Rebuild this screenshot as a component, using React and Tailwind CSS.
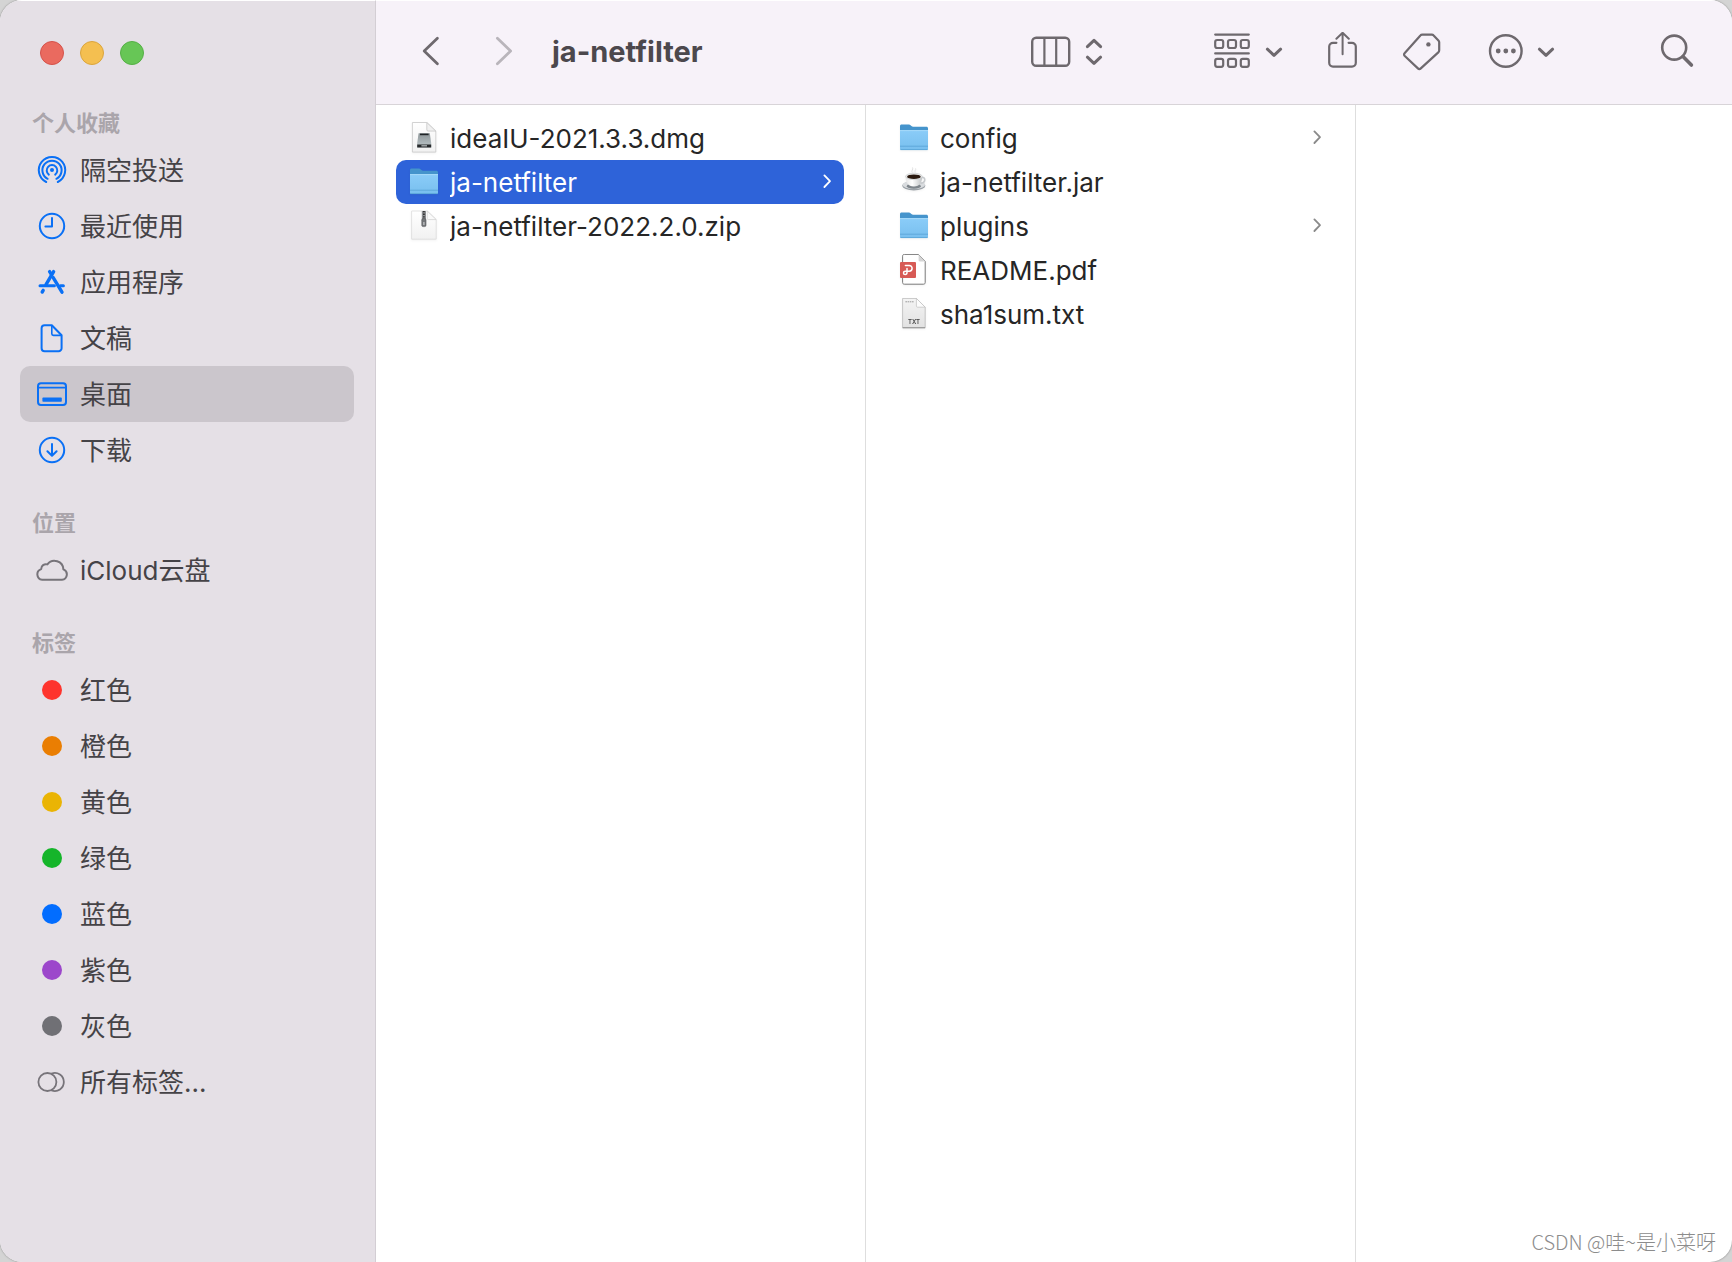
import React from "react";

const favorites = [
  { label: "隔空投送", icon: "airdrop" },
  { label: "最近使用", icon: "clock" },
  { label: "应用程序", icon: "apps" },
  { label: "文稿", icon: "document" },
  { label: "桌面", icon: "desktop", active: true },
  { label: "下载", icon: "download" },
];

const locations = [{ label: "iCloud云盘", icon: "cloud" }];

const tags = [
  { label: "红色", dot: "bg-[#fe342d]" },
  { label: "橙色", dot: "bg-[#ea7e02]" },
  { label: "黄色", dot: "bg-[#eab404]" },
  { label: "绿色", dot: "bg-[#15b52a]" },
  { label: "蓝色", dot: "bg-[#026dff]" },
  { label: "紫色", dot: "bg-[#9c47cb]" },
  { label: "灰色", dot: "bg-[#707075]" },
  { label: "所有标签...", icon: "allTags" },
];

const columns = [
  [
    { name: "ideaIU-2021.3.3.dmg", kind: "dmg" },
    { name: "ja-netfilter", kind: "folder", selected: true },
    { name: "ja-netfilter-2022.2.0.zip", kind: "zip" },
  ],
  [
    { name: "config", kind: "folder" },
    { name: "ja-netfilter.jar", kind: "jar" },
    { name: "plugins", kind: "folder" },
    { name: "README.pdf", kind: "pdf" },
    { name: "sha1sum.txt", kind: "txt" },
  ],
];

/* Sidebar icons, all on a 32px grid */
const sidebarIcons = {
  airdrop: (
    <g>
      <circle cx="16" cy="16" r="2" fill="currentColor" stroke="none" />
      <path d="M12.8 20.6a5.3 5.3 0 1 1 6.400 0" />
      <path d="M11.600 24.800a9.600 9.600 0 1 1 8.800 0" />
      <path d="M10.200 28a13.200 13.200 0 1 1 11.600 0" />
    </g>
  ),
  clock: (
    <g>
      <circle cx="16" cy="16" r="12.2" />
      <path d="M16 8v8.6H9.4" />
    </g>
  ),
  apps: (
    <g strokeWidth="3.4">
      <path d="M17.6 5.6 10 18.6" />
      <path d="M13.6 5.6l1.6 2.6" />
      <path d="M4 19.8h14.4M24.4 19.8h3" strokeWidth="3" />
      <path d="M17.2 11.6 26 26.2" />
      <path d="M7.2 24.4 6.2 26" />
    </g>
  ),
  document: (
    <g>
      <path d="M8.6 3.2h7.2l9.8 10v13a3 3 0 0 1-3 3h-14a3 3 0 0 1-3-3v-20a3 3 0 0 1 3-3z" />
      <path d="M15.8 3.8v8a1.6 1.6 0 0 0 1.6 1.6h7.6" strokeWidth="1.6" />
    </g>
  ),
  desktop: (
    <g>
      <rect x="2" y="5.2" width="28" height="21.8" rx="3" />
      <path d="M2 9.6h28" strokeWidth="1.6" />
      <rect x="6.4" y="19.6" width="19.4" height="4.2" rx="0.8" fill="currentColor" stroke="none" />
    </g>
  ),
  download: (
    <g>
      <circle cx="16" cy="16" r="12.2" />
      <path d="M16 10v11.4M11.4 17.2l4.6 4.6 4.6-4.6" />
    </g>
  ),
  cloud: (
    <path d="M6.200 25.800a5.500 5.500 0 0 1-1-10.700 4.800 4.800 0 0 1 6.200-4.700 8.900 8.900 0 0 1 16 5 5.400 5.400 0 0 1-1.400 10.400z" />
  ),
  allTags: (
    <g strokeWidth="1.800">
      <circle cx="11.400" cy="16" r="9" />
      <path d="M15.600 7.600a9 9 0 1 1 0 16.800" />
    </g>
  ),
};

const SidebarIcon = ({ name }) => (
  <svg
    viewBox="0 0 32 32"
    className="h-8 w-8"
    fill="none"
    stroke="currentColor"
    strokeWidth="2"
    strokeLinecap="round"
    strokeLinejoin="round"
    aria-hidden="true"
  >
    {sidebarIcons[name]}
  </svg>
);

/* File icons, all on a 32px grid */
const fileIcons = {
  folder: (
    <g>
      <path d="M2 5.2c0-1 .6-1.6 1.6-1.6h7.2c1.8 0 2.2 2.2 4.2 2.2h13.4c1 0 1.6.6 1.6 1.6V20H2z" fill="#4594cc" />
      <path d="M2 9.6h28v17.8c0 1-.6 1.6-1.6 1.6H3.6c-1 0-1.6-.6-1.6-1.6z" fill="url(#folderFront)" />
      <path d="M2 9.6h28" stroke="#a9dcfb" strokeWidth="1" />
      <path d="M2 25.2h28M2.400 28.600h27.200" stroke="#5aa5d8" strokeWidth="0.9" />
    </g>
  ),
  dmg: (
    <g>
      <path d="M4.4 1.5h14.4l9 8.6v21H4.400z" fill="url(#paper)" stroke="#c6c6c6" strokeWidth="0.8" />
      <path d="M18.8 1.5v7.4c0 .7.5 1.2 1.2 1.2h7.8z" fill="#f0f0f0" stroke="#c2c2c2" strokeWidth="0.7" />
      <path d="M10.600 12.200h11.200l1.400 9.800v4.400H9.200V22z" fill="url(#drive)" />
      <path d="M12 13.400h8.600" stroke="#202427" strokeWidth="1.600" />
      <path d="M9.200 23.400h14v3.200h-14z" fill="#26292b" />
      <path d="M13.400 24.800h5.600" stroke="#a5abad" strokeWidth="1.400" />
    </g>
  ),
  zip: (
    <g>
      <path d="M3.6 2h15.6l9 8.6v19.6H3.6z" fill="url(#paper)" stroke="#dcdcdc" strokeWidth="0.8" />
      <path d="M19.2 2v7.4c0 .7.5 1.2 1.2 1.2h7.8z" fill="#fafafa" stroke="#cecece" strokeWidth="0.7" />
      <rect x="13.8" y="2" width="4.2" height="10" fill="#8b8d90" />
      <path d="M15.9 2v11" stroke="#333" strokeWidth="1.8" strokeDasharray="1.3 1.3" />
      <rect x="13.8" y="9.6" width="4.2" height="8" rx="1.4" fill="#75777a" stroke="#55575a" strokeWidth="0.6" />
      <path d="M15.9 13v3" stroke="#c8cacc" strokeWidth="1.2" />
    </g>
  ),
  jar: (
    <g>
      <ellipse cx="15.8" cy="20.8" rx="11.6" ry="4.6" fill="#9aa0a6" />
      <ellipse cx="15.8" cy="19.8" rx="11.4" ry="4" fill="#d9dcdf" />
      <ellipse cx="15.8" cy="21.2" rx="7" ry="2.6" fill="#7f868c" />
      <path d="M23.4 12.4c4.6-.8 4.8 5.4-1 6" fill="none" stroke="#c7cacd" strokeWidth="1.6" />
      <path d="M7.6 11.4h16.6c0 5.4-2.2 10-8.3 10s-8.3-4.6-8.3-10z" fill="url(#cup)" />
      <ellipse cx="15.9" cy="11.4" rx="8.3" ry="3.2" fill="#eceded" stroke="#b9bcbe" strokeWidth="0.5" />
      <ellipse cx="15.9" cy="11.7" rx="6.8" ry="2.3" fill="#2b1a10" />
      <path d="M14.4 7.6c-1.6-2 1.4-3 0-5.2M17.4 7.4c-1.4-1.6 1-2.6.2-4" fill="none" stroke="#dfdfdf" strokeWidth="0.9" />
    </g>
  ),
  pdf: (
    <g>
      <path d="M6.4 1.4h14l6.8 7v21c0 1.200-.6 1.800-1.800 1.800h-19c-1.200 0-1.800-.6-1.800-1.800V3.200c0-1.200.6-1.800 1.800-1.800z" fill="#fff" stroke="#6b6b6b" strokeWidth="0.9" />
      <path d="M20.6 1.6v5.6c0 .8.4 1.2 1.2 1.2h5.4z" fill="#d5d5d5" />
      <rect x="2" y="9" width="16" height="16" rx="1" fill="#d75a55" />
      <path d="M7.400 12.400h3.800a2.900 2.900 0 0 1 0 5.800H7.200a1.700 1.700 0 0 0 0 3.400c1.400 0 1.800-.8 1.800-2v-4" fill="none" stroke="#fff" strokeWidth="1.5" strokeLinecap="round" />
    </g>
  ),
  txt: (
    <g>
      <path d="M4.6 1.4h13.8l8.8 8.8v20.4H4.6z" fill="url(#paperGrey)" stroke="#b9b9b9" strokeWidth="0.8" />
      <path d="M18.4 1.4v7.6c0 .7.5 1.2 1.2 1.2h7.6z" fill="#fcfcfc" stroke="#c0c0c0" strokeWidth="0.7" />
      <path d="M7.4 4.8h8.4" stroke="#9a9a9a" strokeWidth="1" strokeDasharray="1.6 0.6" />
      <path d="M4.6 30.8h22.6" stroke="#8d8d8d" strokeWidth="1" />
      <text x="16" y="27.4" textAnchor="middle" fontSize="6" fontWeight="600" fontFamily="Inter, sans-serif" fill="#444">
        TXT
      </text>
    </g>
  ),
};

const FileIcon = ({ kind }) => (
  <svg viewBox="0 1 32 32" className="h-8 w-8 shrink-0 drop-shadow-xs" aria-hidden="true">
    {fileIcons[kind]}
  </svg>
);

/* Gradients shared by the file icons */
const IconGradients = () => (
  <svg className="absolute h-0 w-0" aria-hidden="true">
    <defs>
      <linearGradient id="folderFront" x1="0" y1="0" x2="0" y2="1">
        <stop offset="0" stopColor="#8accf8" />
        <stop offset="1" stopColor="#78bfee" />
      </linearGradient>
      <linearGradient id="paper" x1="0" y1="0" x2="0" y2="1">
        <stop offset="0" stopColor="#ffffff" />
        <stop offset="1" stopColor="#f1f1f1" />
      </linearGradient>
      <linearGradient id="paperGrey" x1="0" y1="0" x2="0" y2="1">
        <stop offset="0" stopColor="#f4f4f4" />
        <stop offset="1" stopColor="#e2e2e2" />
      </linearGradient>
      <linearGradient id="drive" x1="0" y1="0" x2="0" y2="1">
        <stop offset="0" stopColor="#8d9598" />
        <stop offset="1" stopColor="#bcc6c9" />
      </linearGradient>
      <linearGradient id="cup" x1="0" y1="0" x2="1" y2="0">
        <stop offset="0" stopColor="#e6e6e6" />
        <stop offset="0.4" stopColor="#ffffff" />
        <stop offset="1" stopColor="#bfc2c4" />
      </linearGradient>
    </defs>
  </svg>
);

const ToolIcon = ({ className, viewBox, children }) => (
  <svg
    viewBox={viewBox}
    className={className}
    fill="none"
    stroke="currentColor"
    strokeWidth="2.2"
    strokeLinecap="round"
    strokeLinejoin="round"
    aria-hidden="true"
  >
    {children}
  </svg>
);

const ChevronDown = () => (
  <ToolIcon viewBox="0 0 18 40" className="h-10 w-[18px]">
    <path d="M2.4 17.2 9 23.4l6.6-6.2" strokeWidth="3" />
  </ToolIcon>
);

const Toolbar = () => (
  <header className="flex h-[105px] shrink-0 items-center border-t border-b border-t-white border-b-[#d8d4d8] bg-[#f7f2f9] pr-[38px] pb-px pl-[46px] text-[#6e696e]">
    <button type="button" aria-label="后退">
      <ToolIcon viewBox="0 0 18 40" className="h-10 w-[18px]">
        <path d="M15.4 6.2 2.200 19l13.200 12.800" strokeWidth="2.8" />
      </ToolIcon>
    </button>
    <button type="button" aria-label="前进" disabled className="ml-[55px] text-[#b9b5bb]">
      <ToolIcon viewBox="0 0 18 40" className="h-10 w-[18px]">
        <path d="M2.400 6.200 15.600 19 2.400 31.800" strokeWidth="2.8" />
      </ToolIcon>
    </button>
    <h1 className="ml-[39px] flex-1 text-[29px] leading-10 font-bold text-[#4c484d]">ja-netfilter</h1>

    <button type="button" aria-label="显示方式" className="flex items-center gap-[14px]">
      <ToolIcon viewBox="0 0 40 40" className="h-10 w-10">
        <rect x="1.200" y="5.800" width="37" height="28" rx="4" strokeWidth="2.400" />
        <path d="M13.4 5.800v28M25.2 5.800v28" strokeLinecap="butt" />
      </ToolIcon>
      <ToolIcon viewBox="0 0 18 40" className="h-10 w-[18px]">
        <path d="M2.4 14.6 9 8.400l6.600 6.200M2.4 25.2 9 31.4l6.6-6.2" strokeWidth="3" />
      </ToolIcon>
    </button>

    <button type="button" aria-label="分组" className="ml-[111px] flex items-center gap-[15px]">
      <ToolIcon viewBox="0 0 36 40" className="h-10 w-9">
        <path d="M1.2 2.6h33.600M1.2 21.400h33.600" />
        <rect x="1.2" y="8" width="8" height="8" rx="2" />
        <rect x="14" y="8" width="8" height="8" rx="2" />
        <rect x="26.8" y="8" width="8" height="8" rx="2" />
        <rect x="1.2" y="26.8" width="8" height="8" rx="2" />
        <rect x="14" y="26.8" width="8" height="8" rx="2" />
        <rect x="26.8" y="26.8" width="8" height="8" rx="2" />
      </ToolIcon>
      <ChevronDown />
    </button>

    <button type="button" aria-label="共享" className="ml-[45px]">
      <ToolIcon viewBox="0 0 30 40" className="h-10 w-[30px]">
        <path d="M8.4 10.800H5a3.800 3.800 0 0 0-3.800 3.800v16.200A3.800 3.800 0 0 0 5 34.600h19a3.800 3.800 0 0 0 3.800-3.800V14.600a3.800 3.800 0 0 0-3.800-3.800h-3.400" />
        <path d="M14.6 22.200V1.400M8.400 6.800l6.200-6 6.200 6" strokeWidth="2" />
      </ToolIcon>
    </button>

    <button type="button" aria-label="标签" className="ml-[45px]">
      <ToolIcon viewBox="0 0 38 40" className="h-10 w-[38px]">
        <path d="M19.4 2.600h9.400c.7 0 1.200.2 1.600.7l5 5.200c.5.500.8 1 .8 1.700v8c0 .9-.3 1.600-.9 2.200L17.800 36.400c-.9.900-2 .9-2.900 0L1.800 24c-1-1-1-2.100 0-3L17.400 3.400c.5-.6 1.200-.8 2-.8z" />
        <circle cx="25.400" cy="12.400" r="2.200" fill="currentColor" stroke="none" />
      </ToolIcon>
    </button>

    <button type="button" aria-label="操作" className="ml-[47px] flex items-center gap-[13px]">
      <ToolIcon viewBox="0 0 36 40" className="h-10 w-9">
        <circle cx="17.800" cy="19" r="15.800" strokeWidth="2.4" />
        <g fill="currentColor" stroke="none">
          <circle cx="10.200" cy="19" r="2.400" />
          <circle cx="17.800" cy="19" r="2.400" />
          <circle cx="25.400" cy="19" r="2.400" />
        </g>
      </ToolIcon>
      <ChevronDown />
    </button>

    <button type="button" aria-label="搜索" className="ml-[105px]">
      <ToolIcon viewBox="0 0 34 40" className="h-10 w-[34px]">
        <circle cx="14.200" cy="15.600" r="12" strokeWidth="2.600" />
        <path d="M23 24.600 31.400 33" strokeWidth="3.600" />
      </ToolIcon>
    </button>
  </header>
);

const SidebarSection = ({ title, items }) => (
  <section>
    <h2 className="flex h-[38px] items-center pl-3 text-[22px] font-bold text-[#aaa5ab]">{title}</h2>
    <ul>
      {items.map((item) => (
        <li key={item.label}>
          <a
            href="#"
            aria-current={item.active ? "page" : undefined}
            className={`flex h-14 items-center gap-3 rounded-[10px] pl-4 text-[26px] text-[#454347] ${
              item.active ? "bg-[#cbc6cc]" : ""
            }`}
          >
            <span
              className={`flex h-8 w-8 shrink-0 items-center justify-center ${
                item.icon === "cloud" || item.icon === "allTags" ? "text-[#77747a]" : "text-[#0a70f5]"
              }`}
            >
              {item.dot ? (
                <span className={`h-5 w-5 rounded-full ${item.dot}`} />
              ) : (
                <SidebarIcon name={item.icon} />
              )}
            </span>
            {item.label}
          </a>
        </li>
      ))}
    </ul>
  </section>
);

const Sidebar = () => (
  <aside className="flex w-[376px] shrink-0 flex-col border-t border-r border-t-white border-r-[#d3ced4] bg-[#e5e0e6] pr-[21px] pl-5">
    {/* Window controls */}
    <div className="flex h-[103px] items-center gap-4 pl-5">
      <button type="button" aria-label="关闭" className="h-6 w-6 rounded-full border border-[#d5524a] bg-[#ea6a5f]" />
      <button type="button" aria-label="最小化" className="h-6 w-6 rounded-full border border-[#dba53c] bg-[#f4bf50]" />
      <button type="button" aria-label="缩放" className="h-6 w-6 rounded-full border border-[#55b046] bg-[#67c656]" />
    </div>
    <nav className="flex flex-col gap-[26px]">
      <SidebarSection title="个人收藏" items={favorites} />
      <SidebarSection title="位置" items={locations} />
      <SidebarSection title="标签" items={tags} />
    </nav>
  </aside>
);

const FileColumn = ({ files }) => (
  <ul className="w-[490px] shrink-0 border-r border-[#dedede] pt-[11px] pr-[21px] pl-5">
    {files.map((file) => (
      <li key={file.name}>
        <button
          type="button"
          className={`flex h-11 w-full items-center gap-[10px] rounded-[10px] pr-[11px] pl-3 text-left text-[26px] ${
            file.selected ? "bg-[#2e63d9] text-white" : "text-[#262626]"
          }`}
        >
          <FileIcon kind={file.kind} />
          <span className="flex-1 truncate">{file.name}</span>
          {file.kind === "folder" && (
            <svg
              viewBox="0 0 12 20"
              className={`h-5 w-3 ${file.selected ? "text-white" : "text-[#8a8a8a]"}`}
              fill="none"
              stroke="currentColor"
              strokeWidth="1.8"
              strokeLinecap="round"
              strokeLinejoin="round"
              aria-hidden="true"
            >
              <path d="M3.4 3.4l5.600 5.800-5.600 5.800" />
            </svg>
          )}
        </button>
      </li>
    ))}
  </ul>
);

export default function App() {
  return (
    <div className="relative flex min-h-screen flex-col bg-[#d4d4d4] font-[Inter,'Noto_Sans_CJK_SC',sans-serif]">
      <IconGradients />
      <div className="flex flex-1 overflow-hidden rounded-[22px] bg-white shadow-[0_0_2px_#777]">
        <Sidebar />
        <main className="flex min-w-0 flex-1 flex-col">
          <Toolbar />
          <div className="flex flex-1 overflow-hidden">
            {columns.map((files) => (
              <FileColumn key={files[0].name} files={files} />
            ))}
          </div>
        </main>
      </div>
      <p className="absolute right-4 bottom-1 font-['Noto_Sans_CJK_SC',sans-serif] text-[20px] leading-8 font-light text-[#8c8c8c]">
        CSDN @哇~是小菜呀
      </p>
    </div>
  );
}
